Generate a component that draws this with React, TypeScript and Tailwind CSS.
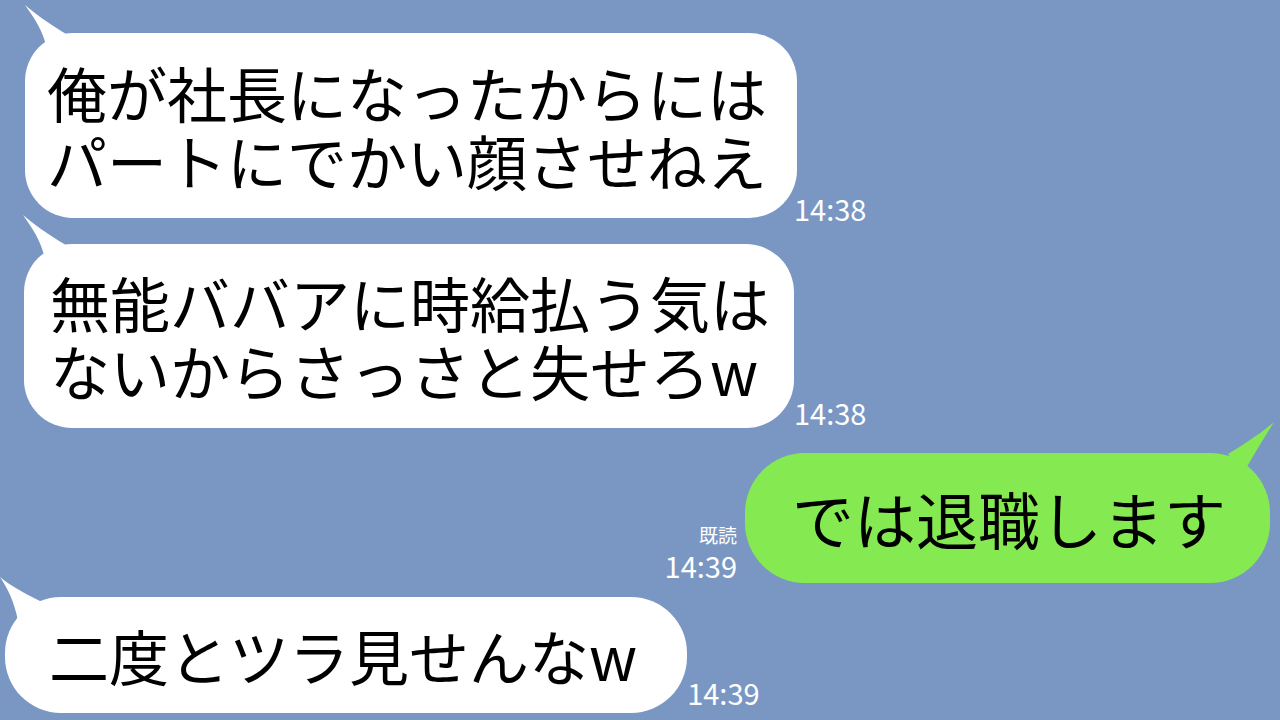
import React from "react";

const FONT = { fontFamily: '"Noto Sans CJK JP", "Noto Sans", sans-serif' };

function TailLeft({ className }: { className: string }) {
  return (
    <svg className={`absolute ${className}`} width="60" height="60" viewBox="0 0 60 60">
      <path d="M0 0 C 10 14, 18 26, 22 44 L 50 34 C 32 24, 14 12, 0 0 Z" fill="#ffffff" />
    </svg>
  );
}

export default function App() {
  return (
    <div
      className="w-[1280px] h-[720px] overflow-hidden bg-[#7a97c3] flex flex-col text-black"
      style={FONT}
    >
      {/* incoming 1 */}
      <div className="flex items-end ml-[25px] mt-[33px]">
        <div className="relative">
          <TailLeft className="left-[0px] top-[-28px]" />
          <div className="relative bg-white rounded-[48px] h-[185px] pl-[22px] pr-[30px] flex flex-col justify-center text-[60px] leading-[68px] whitespace-nowrap">
            <span>俺が社長になったからには</span>
            <span>パートにでかい顔させねえ</span>
          </div>
        </div>
        <span className="text-white text-[29px] leading-[30px] ml-[-3px] mb-[-5px]">14:38</span>
      </div>

      {/* incoming 2 */}
      <div className="flex items-end ml-[24px] mt-[26px]">
        <div className="relative">
          <TailLeft className="left-[-1px] top-[-29px]" />
          <div className="relative bg-white rounded-[48px] h-[184px] pl-[26px] pr-[24px] flex flex-col justify-center text-[60px] leading-[68px] whitespace-nowrap">
            <span>無能ババアに時給払う気は</span>
            <span>ないからさっさと失せろw</span>
          </div>
        </div>
        <span className="text-white text-[29px] leading-[30px] ml-[0px] mb-[1px]">14:38</span>
      </div>

      {/* outgoing */}
      <div className="flex items-end justify-end mr-[10px] mt-[25px]">
        <div className="flex flex-col items-end text-white mr-[8px] mb-[1px]">
          <span className="text-[19px] leading-[26px]">既読</span>
          <span className="text-[29px] leading-[34px]">14:39</span>
        </div>
        <div className="relative">
          <svg className="absolute right-[-4px] top-[-31px]" width="60" height="60" viewBox="0 0 60 60">
            <path d="M60 0 C 46 12, 30 22, 14 32 L 30 50 C 40 32, 50 16, 60 0 Z" fill="#85ea52" />
          </svg>
          <div className="relative bg-[#85ea52] rounded-[60px] h-[130px] pl-[47px] pr-[44px] flex items-center text-[62px] leading-[68px] whitespace-nowrap">
            <span>では退職します</span>
          </div>
        </div>
      </div>

      {/* incoming 3 */}
      <div className="flex items-end ml-[5px] mt-[14px]">
        <div className="relative">
          <svg className="absolute left-[-5px] top-[-20px]" width="60" height="60" viewBox="0 0 60 60">
            <path d="M0 0 C 8 12, 14 24, 18 44 L 44 26 C 28 18, 12 10, 0 0 Z" fill="#ffffff" />
          </svg>
          <div className="relative bg-white rounded-[56px] h-[116px] pl-[44px] pr-[50px] flex items-center text-[60px] leading-[68px] whitespace-nowrap">
            <span>二度とツラ見せんなw</span>
          </div>
        </div>
        <span className="text-white text-[29px] leading-[30px] ml-[0px] mb-[6px]">14:39</span>
      </div>
    </div>
  );
}
